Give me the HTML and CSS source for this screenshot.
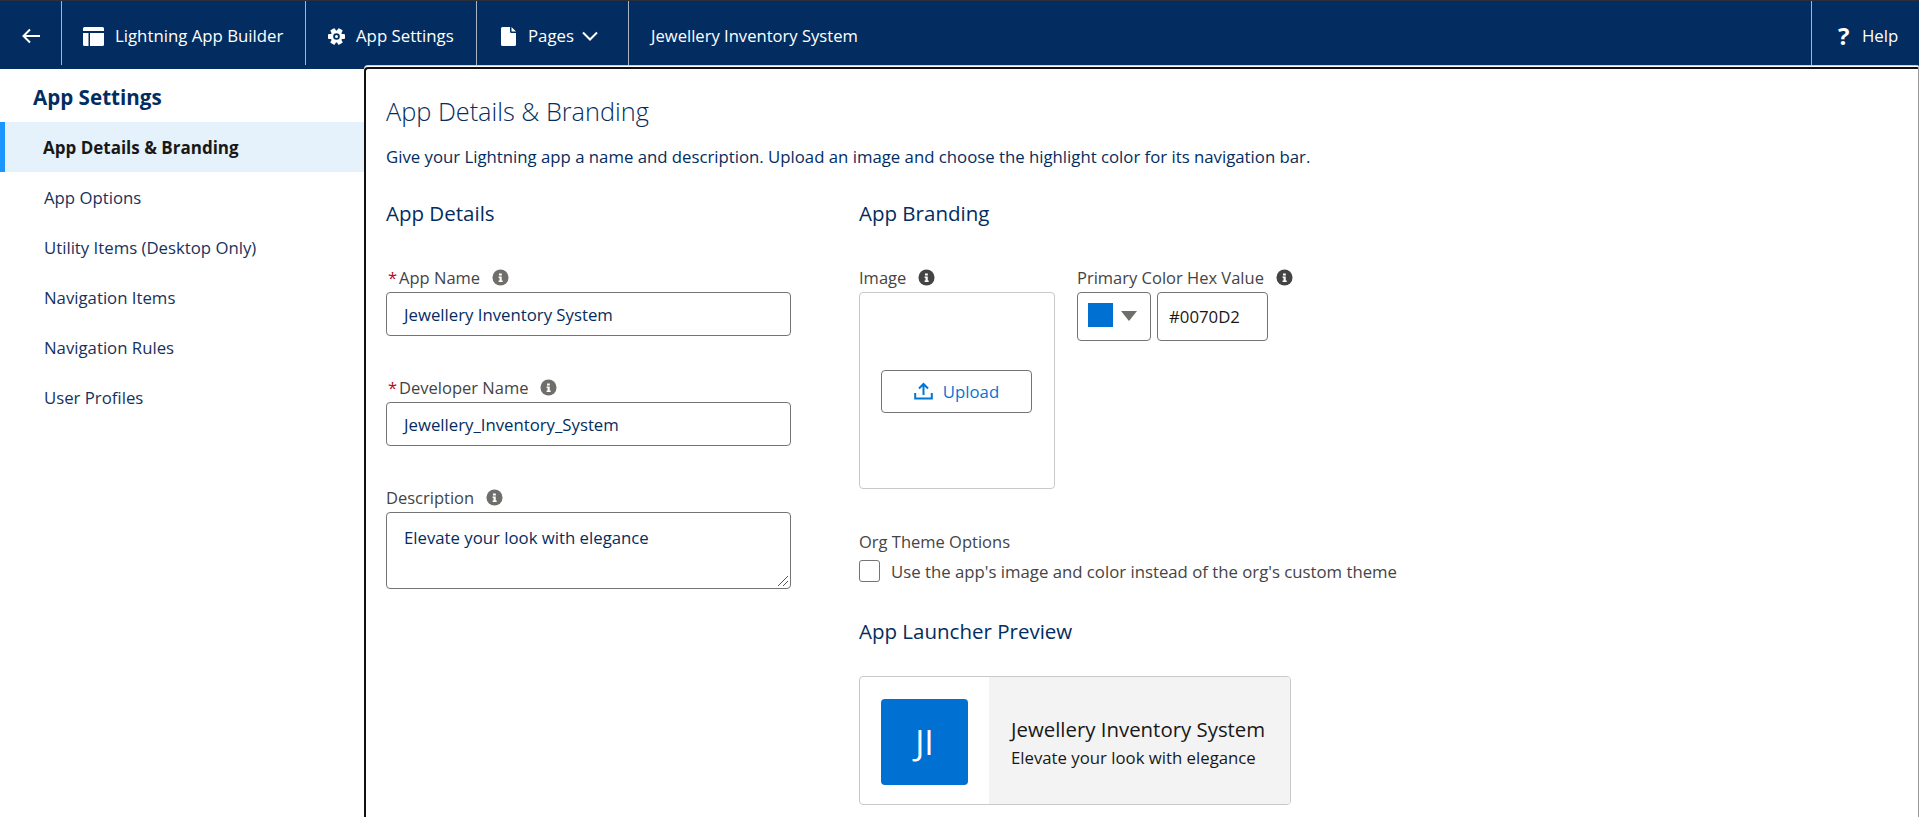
FILE: index.html
```html
<!DOCTYPE html>
<html lang="en">
<head>
<meta charset="utf-8">
<title>Lightning App Builder</title>
<link rel="stylesheet" href="styles.css">
</head>
<body>
<header class="topbar">
  <div class="tb-item tb-back">
    <svg class="ico" width="20" height="20" viewBox="0 0 20 20"><path d="M19 10H3M9 3.500 2.500 10 9 16.500" fill="none" stroke="#fff" stroke-width="2"/></svg>
  </div>
  <div class="tb-item tb-builder">
    <svg class="ico" width="21" height="19" viewBox="0 0 21 19"><path fill="#fff" d="M1.500 0h18A1.500 1.500 0 0 1 21 1.500V4H0V1.500A1.500 1.500 0 0 1 1.500 0zM0 6h5.500v13H1.500A1.500 1.500 0 0 1 0 17.500zM7 6h14v11.500a1.500 1.500 0 0 1-1.500 1.500H7z"/></svg>
    <span>Lightning App Builder</span>
  </div>
  <div class="tb-item tb-settings">
    <svg class="ico" width="17" height="17" viewBox="0 0 17 17"><g fill="#fff"><circle cx="8.500" cy="8.500" r="6"/><rect x="6" y="0" width="5" height="17" rx="1" transform="rotate(30 8.500 8.500)"/><rect x="6" y="0" width="5" height="17" rx="1" transform="rotate(90 8.500 8.500)"/><rect x="6" y="0" width="5" height="17" rx="1" transform="rotate(150 8.500 8.500)"/></g><circle cx="8.500" cy="8.500" r="3.300" fill="#032d60"/><circle cx="8.500" cy="8.500" r="1.500" fill="#fff"/></svg>
    <span>App Settings</span>
  </div>
  <div class="tb-item tb-pages">
    <svg class="ico" width="15" height="19" viewBox="0 0 15 19"><path fill="#fff" d="M1.500 0H9v4.500A1.500 1.500 0 0 0 10.500 6H15v11.500a1.500 1.500 0 0 1-1.500 1.500h-12A1.500 1.500 0 0 1 0 17.500V1.500A1.500 1.500 0 0 1 1.500 0zM10.500 0 15 4.500h-4a.5.5 0 0 1-.5-.5z"/></svg>
    <span>Pages</span>
    <svg class="ico chev" width="16" height="10" viewBox="0 0 16 10"><path d="M1 1.500 8 8.500l7-7" fill="none" stroke="#fff" stroke-width="2"/></svg>
  </div>
  <div class="tb-item tb-name"><span>Jewellery Inventory System</span></div>
  <div class="tb-item tb-help">
    <span class="q">?</span>
    <span>Help</span>
  </div>
</header>

<div class="workspace">
  <nav class="sidebar">
    <h2 class="side-title">App Settings</h2>
    <ul class="side-list">
      <li class="side-item active">App Details &amp; Branding</li>
      <li class="side-item">App Options</li>
      <li class="side-item">Utility Items (Desktop Only)</li>
      <li class="side-item">Navigation Items</li>
      <li class="side-item">Navigation Rules</li>
      <li class="side-item">User Profiles</li>
    </ul>
  </nav>

  <main class="panel">
    <h1 class="panel-title">App Details &amp; Branding</h1>
    <p class="panel-desc">Give your Lightning app a name and description. Upload an image and choose the highlight color for its navigation bar.</p>

    <div class="columns">
      <section class="col-details">
        <h3 class="section-title">App Details</h3>

        <div class="label first"><span class="req">*</span>App Name<svg class="info" viewBox="0 0 18 18"><circle cx="9" cy="9" r="8.500"/><path d="M7.400 4.800h3v2h-3zM7 8h3.300v4.300h1v1.500H7v-1.500h1V9.500H7z" fill="#fff"/></svg></div>
        <div class="field">Jewellery Inventory System</div>

        <div class="label"><span class="req">*</span>Developer Name<svg class="info" viewBox="0 0 18 18"><circle cx="9" cy="9" r="8.500"/><path d="M7.400 4.800h3v2h-3zM7 8h3.300v4.300h1v1.500H7v-1.500h1V9.500H7z" fill="#fff"/></svg></div>
        <div class="field">Jewellery_Inventory_System</div>

        <div class="label">Description<svg class="info" viewBox="0 0 18 18"><circle cx="9" cy="9" r="8.500"/><path d="M7.400 4.800h3v2h-3zM7 8h3.300v4.300h1v1.500H7v-1.500h1V9.500H7z" fill="#fff"/></svg></div>
        <div class="field area">Elevate your look with elegance
          <svg class="grip" width="12" height="12" viewBox="0 0 12 12"><path d="M1 11 11 1M6 11l5-5" stroke="#555" stroke-width="1" fill="none"/></svg>
        </div>
      </section>

      <section class="col-branding">
        <h3 class="section-title">App Branding</h3>

        <div class="brand-row">
          <div class="image-col">
            <div class="label first">Image<svg class="info dark" viewBox="0 0 18 18"><circle cx="9" cy="9" r="8.500"/><path d="M7.400 4.800h3v2h-3zM7 8h3.300v4.300h1v1.500H7v-1.500h1V9.500H7z" fill="#fff"/></svg></div>
            <div class="image-box">
              <div class="upload">
                <svg width="19" height="18" viewBox="0 0 19 18"><path d="M1.200 11v5.500h16.600V11M9.500 13V3M5 6.500 9.500 2 14 6.500" fill="none" stroke="#0176d3" stroke-width="2"/></svg>
                <span>Upload</span>
              </div>
            </div>
          </div>
          <div class="color-col">
            <div class="label first">Primary Color Hex Value<svg class="info dark" viewBox="0 0 18 18"><circle cx="9" cy="9" r="8.500"/><path d="M7.400 4.800h3v2h-3zM7 8h3.300v4.300h1v1.500H7v-1.500h1V9.500H7z" fill="#fff"/></svg></div>
            <div class="color-row">
              <div class="picker"><span class="swatch"></span><span class="caret"></span></div>
              <div class="hex">#0070D2</div>
            </div>
          </div>
        </div>

        <div class="label org">Org Theme Options</div>
        <div class="check-row"><span class="checkbox"></span><span class="check-text">Use the app's image and color instead of the org's custom theme</span></div>

        <h3 class="section-title preview-title">App Launcher Preview</h3>
        <div class="card">
          <div class="card-left"><div class="tile">JI</div></div>
          <div class="card-right">
            <div class="card-name">Jewellery Inventory System</div>
            <div class="card-sub">Elevate your look with elegance</div>
          </div>
        </div>
      </section>
    </div>
  </main>
</div>
</body>
</html>
```

FILE: styles.css
```css
* { box-sizing: border-box; }
html, body { margin: 0; height: 817px; overflow: hidden; background: #fff; }
body { font-family: "Open Sans", "Noto Sans", "Liberation Sans", sans-serif; font-size: 16.750px; color: #032d60; display: flex; flex-direction: column; }

.topbar { height: 69px; flex: none; display: flex; background: #032d60; border-top: 1px solid #2b2f3a; color: #fff; font-size: 16.800px; }
.tb-item { display: flex; align-items: center; height: 64px; border-right: 1px solid #aab4c4; padding-top: 5px; }
.tb-back { width: 62px; justify-content: center; padding-left: 1px; }
.tb-builder { width: 244px; padding-left: 21px; gap: 11px; }
.tb-settings { width: 171px; padding-left: 22px; gap: 11px; }
.tb-pages { width: 152px; padding-left: 24px; gap: 12px; }
.tb-name { flex: 1; padding-left: 22px; font-size: 16.600px; }
.tb-help { width: 107px; padding-left: 26px; border-right: 0; gap: 10px; }
.q { width: 14px; font-weight: 700; font-size: 24px; line-height: 1; }
.ico { flex: none; margin-top: 1px; }
.chev { margin-left: -4px; }

.workspace { flex: 1; display: flex; min-height: 0; }

.sidebar { width: 364px; flex: none; }
.side-title { margin: 0; padding: 16px 0 13px 33px; font-size: 20.600px; line-height: 24px; font-weight: 700; color: #032d60; }
.side-list { list-style: none; margin: 0; padding: 0; }
.side-item { height: 50px; display: flex; align-items: center; padding-left: 44px; color: #16325c; }
.side-item.active { background: #e5f2fc; font-weight: 700; font-size: 17px; color: #181818; border-left: 5px solid #1b96ff; padding-left: 38px; }

.panel { flex: 1; margin-top: -2px; position: relative; background: #fff; border-top: 2px solid #111; border-left: 2px solid #111; border-right: 1px solid #999; border-radius: 4px 2px 0 0; padding: 26px 0 0 20px; box-shadow: 0 -1px 0 #fff, 0 -2px 0 #c9ced6; }
.panel-title { margin: 0; font-size: 25.300px; line-height: 32px; font-weight: 300; color: #032d60; }
.panel-desc { margin: 20px 0 0; line-height: 20px; color: #032d60; }

.columns { display: grid; grid-template-columns: 405px 1fr; column-gap: 68px; margin-top: 34px; }
.section-title { margin: 0; font-size: 20.500px; line-height: 24px; font-weight: 400; color: #032d60; }

.label { display: flex; align-items: center; height: 20px; margin: 41px 0 5px; color: #444; font-size: 16.500px; }
.label.first { margin-top: 42px; }
.req { color: #ba0517; margin: 0 2px 0 2px; }
.info { width: 17px; height: 17px; margin-left: 12px; fill: #706e6b; flex: none; }
.info.dark { fill: #444; }

.field { height: 44px; border: 1px solid #747474; border-radius: 4px; display: flex; align-items: center; padding: 0 17px; color: #032d60; }
.field.area { height: 77px; align-items: flex-start; padding-top: 15px; line-height: 20px; position: relative; }
.grip { position: absolute; right: 1px; bottom: 1px; }

.brand-row { display: flex; gap: 22px; }
.image-col { width: 196px; }
.image-box { height: 197px; border: 1px solid #c9c9c9; border-radius: 4px; display: flex; align-items: center; justify-content: center; }
.upload { width: 151px; height: 43px; margin: 1px 1px 0 0; border: 1px solid #747474; border-radius: 4px; display: flex; align-items: center; justify-content: center; gap: 10px; color: #0176d3; }

.color-row { display: flex; gap: 6px; }
.picker { width: 74px; height: 49px; border: 1px solid #747474; border-radius: 4px; display: flex; align-items: flex-start; padding: 10px 0 0 10px; gap: 8px; }
.swatch { width: 25px; height: 24px; background: #0070d2; }
.caret { width: 0; height: 0; margin-top: 8px; border-left: 8px solid transparent; border-right: 8px solid transparent; border-top: 10px solid #706e6b; }
.hex { width: 111px; height: 49px; border: 1px solid #747474; border-radius: 4px; display: flex; align-items: center; padding-left: 11px; color: #181818; }

.label.org { margin: 42px 0 9px; }
.check-row { display: flex; align-items: center; height: 22px; gap: 11px; color: #444; }
.checkbox { width: 21px; height: 22px; border: 1px solid #747474; border-radius: 3px; flex: none; }

.preview-title { margin-top: 37px; }
.card { width: 432px; height: 129px; margin-top: 33px; border: 1px solid #c9c9c9; border-radius: 4px; display: flex; overflow: hidden; }
.card-left { width: 129px; flex: none; padding: 22px 0 0 21px; }
.tile { width: 87px; height: 86px; background: #0070d2; border-radius: 4px; color: #fff; font-size: 34px; display: flex; align-items: center; justify-content: center; }
.card-right { flex: 1; background: #f3f3f3; padding: 40px 0 0 22px; color: #181818; }
.card-name { font-size: 20.400px; line-height: 24px; }
.card-sub { margin-top: 7px; line-height: 20px; }
```
